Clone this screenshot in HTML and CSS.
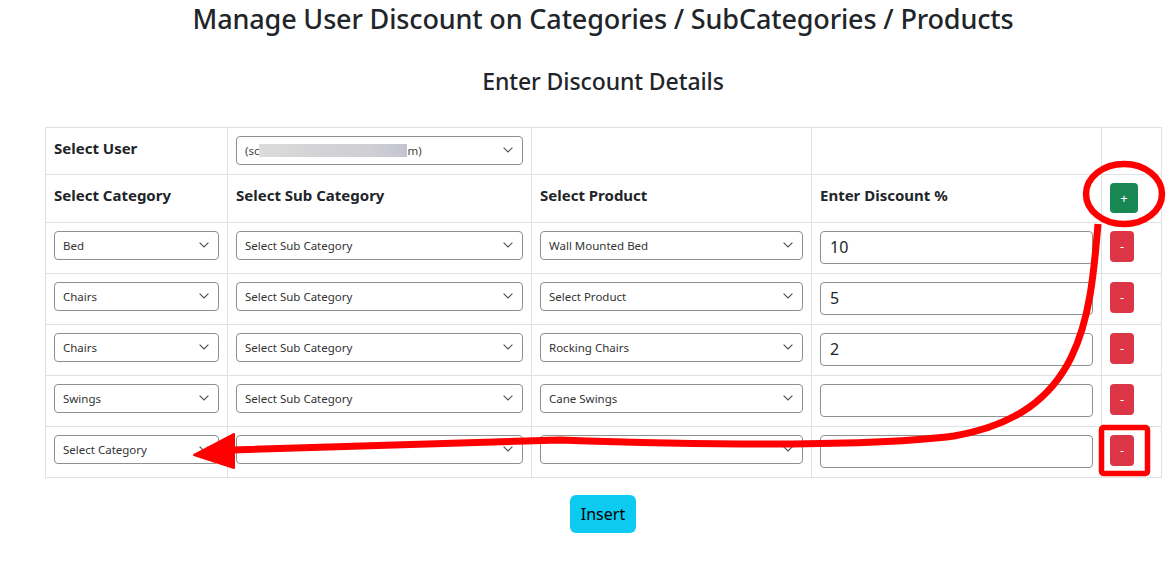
FILE: index.html
```html
<!DOCTYPE html>
<html lang="en">
<head>
<meta charset="utf-8">
<title>Manage User Discount</title>
<link rel="stylesheet" href="styles.css">
</head>
<body>
<div class="page">
  <h1 class="title">Manage User Discount on Categories / SubCategories / Products</h1>
  <h2 class="subtitle">Enter Discount Details</h2>

  <table class="grid">
    <colgroup>
      <col class="c1"><col class="c2"><col class="c3"><col class="c4"><col class="c5">
    </colgroup>
    <tbody>
      <tr>
        <th>Select User</th>
        <td><div class="sel user-sel">(sc<span class="blur"></span>m)</div></td>
        <td></td><td></td><td></td>
      </tr>
      <tr>
        <th>Select Category</th>
        <th>Select Sub Category</th>
        <th>Select Product</th>
        <th>Enter Discount %</th>
        <td><button class="btn btn-add">+</button></td>
      </tr>
      <tr>
        <td><select class="sel"><option>Bed</option></select></td>
        <td><select class="sel"><option>Select Sub Category</option></select></td>
        <td><select class="sel"><option>Wall Mounted Bed</option></select></td>
        <td><input class="inp" type="text" value="10"></td>
        <td><button class="btn btn-del">-</button></td>
      </tr>
      <tr>
        <td><select class="sel"><option>Chairs</option></select></td>
        <td><select class="sel"><option>Select Sub Category</option></select></td>
        <td><select class="sel"><option>Select Product</option></select></td>
        <td><input class="inp" type="text" value="5"></td>
        <td><button class="btn btn-del">-</button></td>
      </tr>
      <tr>
        <td><select class="sel"><option>Chairs</option></select></td>
        <td><select class="sel"><option>Select Sub Category</option></select></td>
        <td><select class="sel"><option>Rocking Chairs</option></select></td>
        <td><input class="inp" type="text" value="2"></td>
        <td><button class="btn btn-del">-</button></td>
      </tr>
      <tr>
        <td><select class="sel"><option>Swings</option></select></td>
        <td><select class="sel"><option>Select Sub Category</option></select></td>
        <td><select class="sel"><option>Cane Swings</option></select></td>
        <td><input class="inp" type="text" value=""></td>
        <td><button class="btn btn-del">-</button></td>
      </tr>
      <tr>
        <td><select class="sel"><option>Select Category</option></select></td>
        <td><select class="sel"><option></option></select></td>
        <td><select class="sel"><option></option></select></td>
        <td><input class="inp" type="text" value=""></td>
        <td><button class="btn btn-del">-</button></td>
      </tr>
    </tbody>
  </table>

  <div class="actions">
    <button class="btn btn-insert">Insert</button>
  </div>

  <svg class="annot" width="1174" height="574" viewBox="0 0 1174 574" aria-hidden="true">
    <ellipse cx="1124" cy="194" rx="38" ry="30" fill="none" stroke="#ff0000" stroke-width="6.5"/>
    <path d="M1098 224 C1090 320 1082 414 954 436 C870 447 700 445 560 440 L232 450" fill="none" stroke="#ff0000" stroke-width="7" stroke-linejoin="round"/>
    <polygon points="194,455 234,434 234,468" fill="#ff0000" stroke="#ff0000" stroke-width="2" stroke-linejoin="round"/>
    <rect x="1101.5" y="427.5" width="46" height="46" rx="2" fill="none" stroke="#ff0000" stroke-width="5.5"/>
  </svg>
</div>
</body>
</html>
```

FILE: styles.css
```css
* { box-sizing: border-box; }

html, body {
  margin: 0;
  background: #ffffff;
}

body {
  font-family: "Noto Sans", "Open Sans", sans-serif;
  color: #212529;
  font-size: 16px;
  line-height: 1.5;
}

.page {
  position: relative;
  width: 1174px;
  min-height: 574px;
  padding: 3px 13px 0 45px;
}

.title {
  margin: 0 0 33px;
  font-size: 27px;
  font-weight: 500;
  line-height: 1.2;
  letter-spacing: -0.15px;
  text-align: center;
}

.subtitle {
  margin: 0 0 31px;
  font-size: 23px;
  font-weight: 500;
  line-height: 1.2;
  letter-spacing: -0.1px;
  text-align: center;
}

.grid {
  width: 1116px;
  table-layout: fixed;
  border-collapse: collapse;
  border: 1px solid #dee2e6;
}

.c1 { width: 182px; }
.c2 { width: 304px; }
.c3 { width: 280px; }
.c4 { width: 290px; }
.c5 { width: 60px; }

.grid th,
.grid td {
  border: 1px solid #dee2e6;
  padding: 8px 8px 9px;
  vertical-align: top;
  text-align: left;
}

.grid th {
  font-weight: 700;
  font-size: 15px;
  line-height: 25px;
}

.sel {
  display: block;
  width: 100%;
  height: 29px;
  margin: 0;
  padding: 0 28px 0 8px;
  border: 1px solid #8f8f8f;
  border-radius: 4px;
  background-color: #fff;
  background-image: url("data:image/svg+xml,%3Csvg xmlns='http://www.w3.org/2000/svg' viewBox='0 0 10 6'%3E%3Cpath d='M0.6 0.6 L5 5 L9.4 0.6' fill='none' stroke='%23555' stroke-width='1.2'/%3E%3C/svg%3E");
  background-repeat: no-repeat;
  background-position: right 9px center;
  background-size: 10px 6px;
  font-family: inherit;
  font-size: 11.5px;
  color: #333;
  line-height: 27px;
  -webkit-appearance: none;
  appearance: none;
  outline: none;
}

.user-sel {
  white-space: nowrap;
  color: #444;
}

.blur {
  display: inline-block;
  width: 148px;
  height: 13px;
  vertical-align: -2px;
  background: linear-gradient(90deg, #dcdcdc 0%, #d3d3d6 40%, #cfcfd4 75%, #c4c4d0 100%);
}

.inp {
  display: block;
  width: 100%;
  height: 33px;
  margin: 0;
  padding: 0 9px;
  border: 1px solid #8f8f8f;
  border-radius: 4px;
  font-family: inherit;
  font-size: 16px;
  color: #212529;
  outline: none;
}

.btn {
  display: inline-block;
  margin: 0;
  border: 0;
  font-family: inherit;
  cursor: pointer;
  color: #fff;
}

.btn-add {
  width: 28px;
  height: 30px;
  padding: 0;
  border-radius: 4px;
  background: #198754;
  font-size: 13px;
  line-height: 30px;
}

.btn-del {
  width: 24px;
  height: 31px;
  padding: 0;
  border-radius: 4px;
  background: #dc3545;
  font-size: 13px;
  line-height: 31px;
}

.actions {
  display: flex;
  justify-content: center;
  padding-top: 17px;
}

.btn-insert {
  width: 66px;
  height: 38px;
  padding: 0;
  border-radius: 6px;
  background: #0dcaf0;
  color: #000;
  font-size: 16px;
  line-height: 38px;
}

.annot {
  position: absolute;
  top: 0;
  left: 0;
  pointer-events: none;
}
```
